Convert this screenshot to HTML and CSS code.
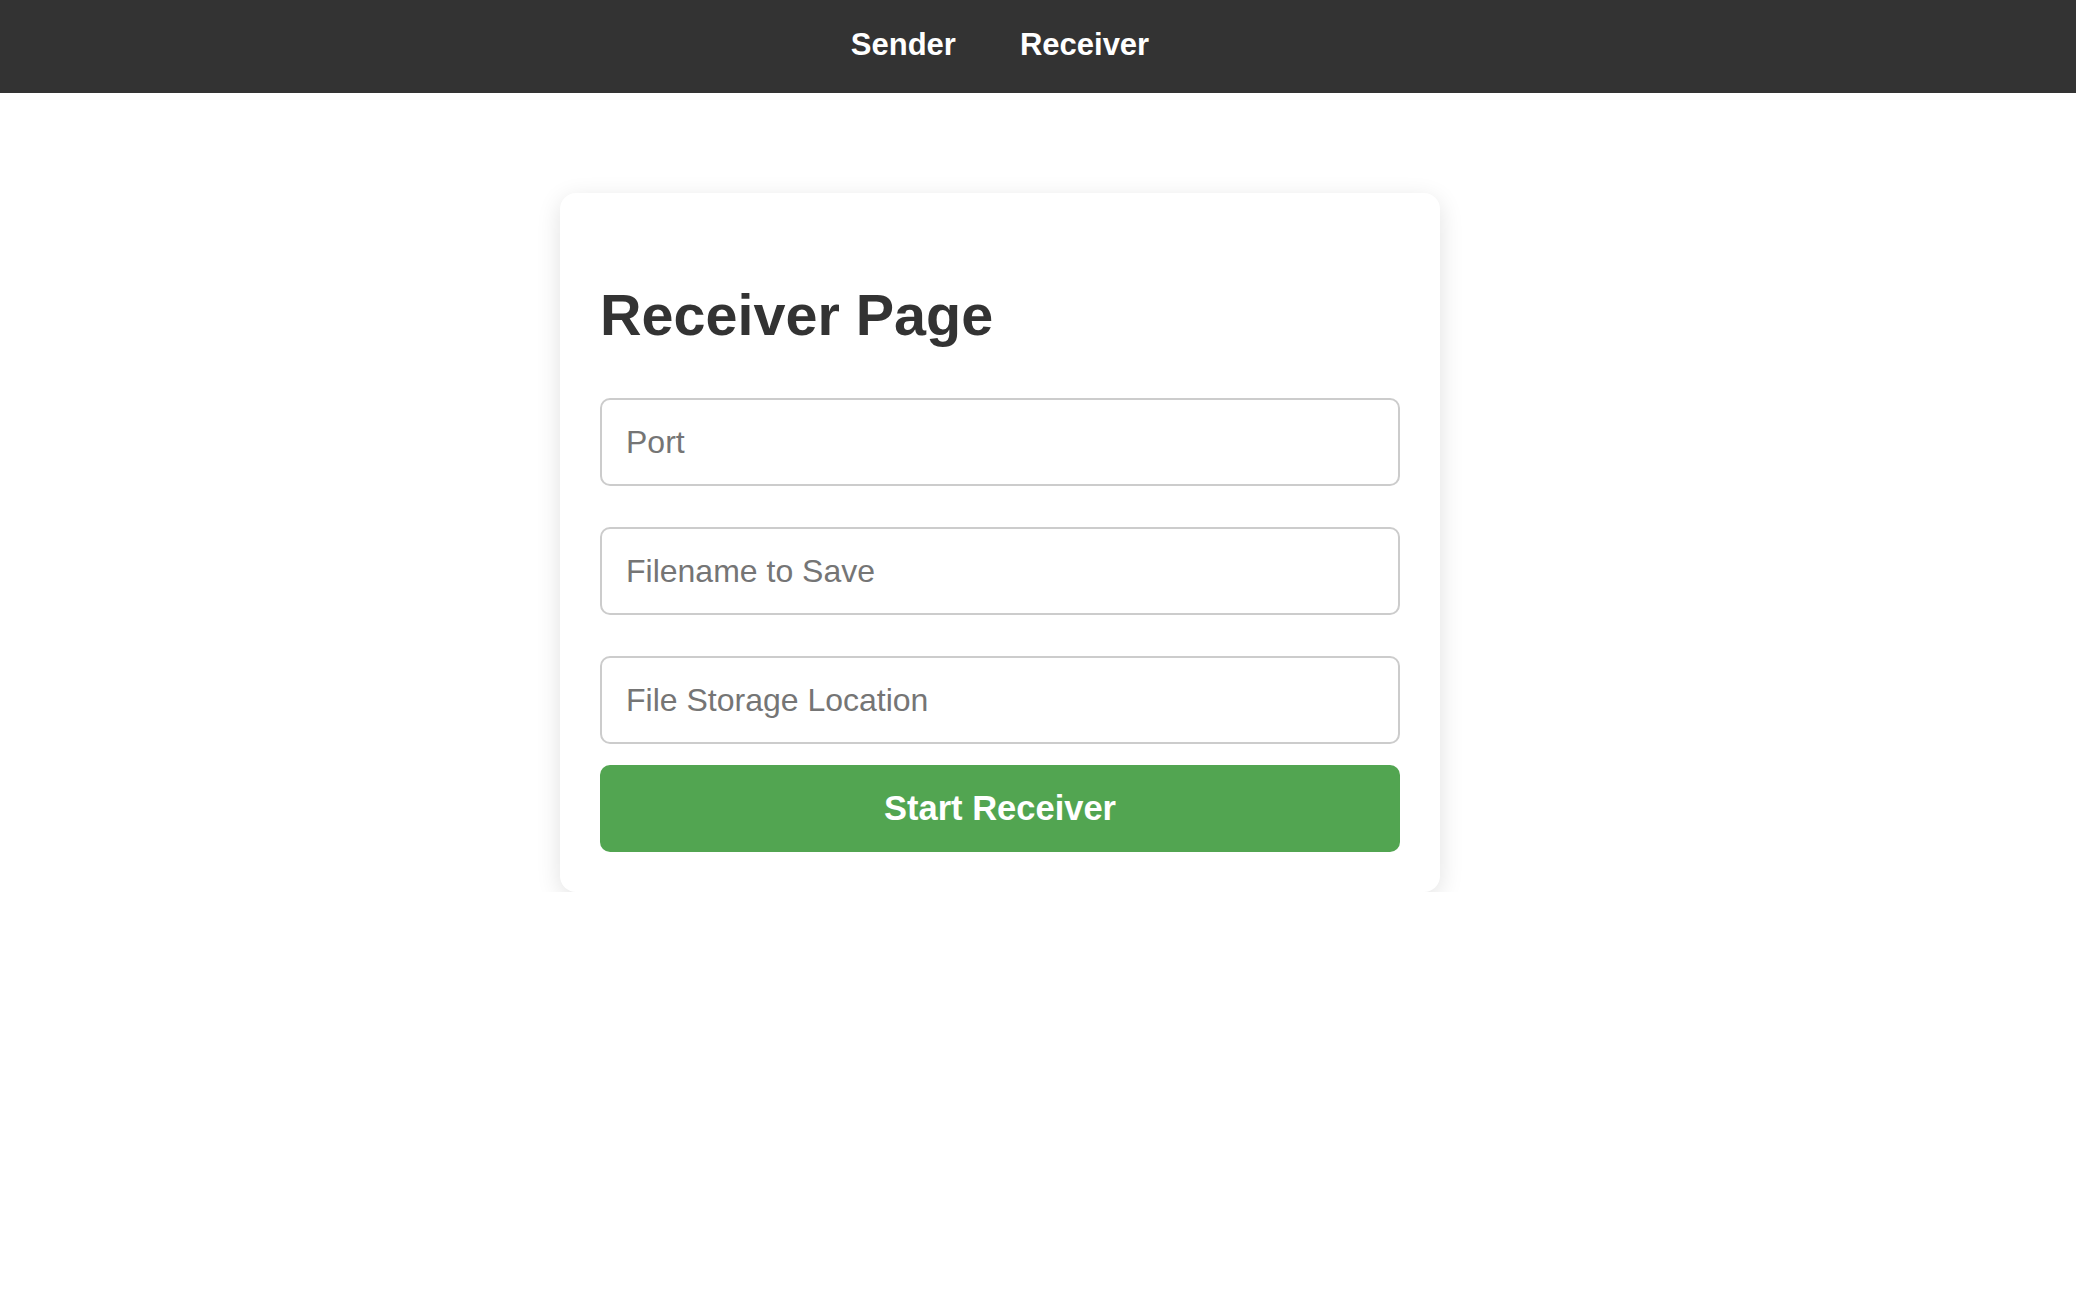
FILE: index.html
```html
<!DOCTYPE html>
<html lang="en">
<head>
<meta charset="utf-8">
<title>Receiver Page</title>
<link rel="stylesheet" href="styles.css">
</head>
<body>
<nav class="topnav">
  <a class="navlink" href="#">Sender</a>
  <a class="navlink" href="#">Receiver</a>
</nav>
<main class="main">
  <section class="card">
    <h1 class="title">Receiver Page</h1>
    <form class="form">
      <input class="field" type="text" placeholder="Port">
      <input class="field" type="text" placeholder="Filename to Save">
      <input class="field field-last" type="text" placeholder="File Storage Location">
      <button class="btn" type="button">Start Receiver</button>
    </form>
  </section>
</main>
</body>
</html>
```

FILE: styles.css
```css
html, body {
  margin: 0;
  padding: 0;
  background: #ffffff;
  font-family: "Liberation Sans", Arial, sans-serif;
}

.topnav {
  background: #333333;
  height: 93px;
  box-sizing: border-box;
  padding: 26px 76px 30px 0;
  display: flex;
  justify-content: center;
  gap: 64px;
}

.navlink {
  color: #ffffff;
  text-decoration: none;
  font-weight: bold;
  font-size: 31px;
  line-height: 37px;
}

.main {
  display: flex;
  justify-content: center;
  padding: 100px 76px 0 0;
}

.card {
  width: 880px;
  box-sizing: border-box;
  padding: 40px;
  background: #ffffff;
  border-radius: 16px;
  box-shadow: 0 6px 24px rgba(0, 0, 0, 0.12);
}

.title {
  margin: 49px 0 50px;
  font-size: 57.5px;
  line-height: 66px;
  font-weight: bold;
  color: #333333;
}

.form {
  display: flex;
  flex-direction: column;
}

.field {
  display: block;
  width: 100%;
  height: 88px;
  box-sizing: border-box;
  margin: 0 0 41px;
  padding: 0 24px;
  border: 2px solid #cccccc;
  border-radius: 10px;
  font-family: "Liberation Sans", Arial, sans-serif;
  font-size: 32px;
  color: #333333;
  background: #ffffff;
  outline: none;
}

.field::placeholder {
  color: #757575;
}

.field-last {
  margin-bottom: 21px;
}

.btn {
  width: 100%;
  height: 87px;
  border: none;
  border-radius: 10px;
  background: #52a551;
  color: #ffffff;
  font-family: "Liberation Sans", Arial, sans-serif;
  font-weight: bold;
  font-size: 34.5px;
  cursor: pointer;
}
```
